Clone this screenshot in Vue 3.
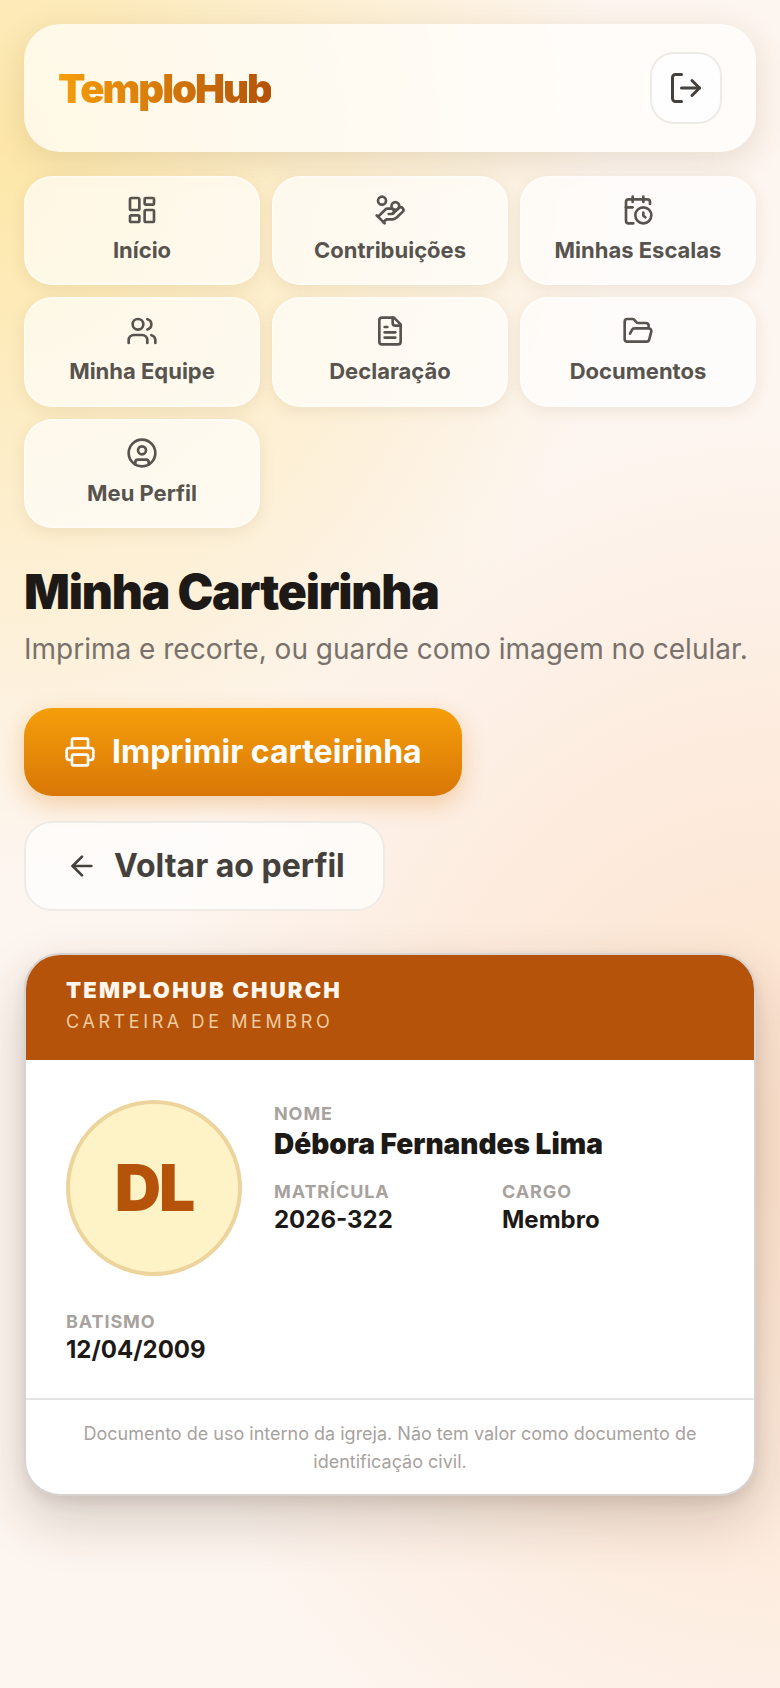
<script setup>
const navItems = [
  { label: 'Início', icon: 'dash' },
  { label: 'Contribuições', icon: 'hand' },
  { label: 'Minhas Escalas', icon: 'cal' },
  { label: 'Minha Equipe', icon: 'users' },
  { label: 'Declaração', icon: 'file' },
  { label: 'Documentos', icon: 'folder' },
  { label: 'Meu Perfil', icon: 'user' },
]
</script>

<template>
  <div class="page">
    <header class="topbar">
      <span class="logo">TemploHub</span>
      <button class="logout" aria-label="Sair">
        <svg width="36" height="36" viewBox="0 0 24 24" fill="none" stroke="currentColor" stroke-width="2" stroke-linecap="round" stroke-linejoin="round">
          <path d="M9 21H5a2 2 0 0 1-2-2V5a2 2 0 0 1 2-2h4" />
          <polyline points="16 17 21 12 16 7" />
          <line x1="21" y1="12" x2="9" y2="12" />
        </svg>
      </button>
    </header>

    <nav class="nav">
      <a v-for="item in navItems" :key="item.label" class="tile">
        <svg width="32" height="32" viewBox="0 0 24 24" fill="none" stroke="currentColor" stroke-width="2" stroke-linecap="round" stroke-linejoin="round">
          <template v-if="item.icon === 'dash'">
            <rect x="3" y="3" width="7" height="9" rx="1" />
            <rect x="14" y="3" width="7" height="5" rx="1" />
            <rect x="14" y="12" width="7" height="9" rx="1" />
            <rect x="3" y="16" width="7" height="5" rx="1" />
          </template>
          <template v-else-if="item.icon === 'hand'">
            <path d="M11 15h2a2 2 0 1 0 0-4h-3c-.6 0-1.1.2-1.4.6L3 17" />
            <path d="m7 21 1.6-1.4c.3-.4.8-.6 1.4-.6h4c1.1 0 2.1-.4 2.8-1.2l4.6-4.4a2 2 0 0 0-2.75-2.91l-4.2 3.9" />
            <path d="m2 16 6 6" />
            <circle cx="16" cy="9" r="2.9" />
            <circle cx="6" cy="5" r="3" />
          </template>
          <template v-else-if="item.icon === 'cal'">
            <path d="M21 7.5V6a2 2 0 0 0-2-2H5a2 2 0 0 0-2 2v14a2 2 0 0 0 2 2h3.5" />
            <path d="M16 2v4" />
            <path d="M8 2v4" />
            <path d="M3 10h5" />
            <path d="M17.5 17.5 16 16.3V14" />
            <circle cx="16" cy="16" r="6" />
          </template>
          <template v-else-if="item.icon === 'users'">
            <path d="M16 21v-2a4 4 0 0 0-4-4H6a4 4 0 0 0-4 4v2" />
            <circle cx="9" cy="7" r="4" />
            <path d="M22 21v-2a4 4 0 0 0-3-3.87" />
            <path d="M16 3.13a4 4 0 0 1 0 7.75" />
          </template>
          <template v-else-if="item.icon === 'file'">
            <path d="M15 2H6a2 2 0 0 0-2 2v16a2 2 0 0 0 2 2h12a2 2 0 0 0 2-2V7Z" />
            <path d="M14 2v4a2 2 0 0 0 2 2h4" />
            <path d="M10 9H8" />
            <path d="M16 13H8" />
            <path d="M16 17H8" />
          </template>
          <template v-else-if="item.icon === 'folder'">
            <path d="m6 14 1.5-2.9A2 2 0 0 1 9.24 10H20a2 2 0 0 1 1.94 2.5l-1.54 6a2 2 0 0 1-1.95 1.5H4a2 2 0 0 1-2-2V5a2 2 0 0 1 2-2h3.9a2 2 0 0 1 1.69.9l.81 1.2a2 2 0 0 0 1.67.9H18a2 2 0 0 1 2 2v2" />
          </template>
          <template v-else>
            <circle cx="12" cy="12" r="10" />
            <circle cx="12" cy="10" r="3" />
            <path d="M7 20.662V19a2 2 0 0 1 2-2h6a2 2 0 0 1 2 2v1.662" />
          </template>
        </svg>
        <span>{{ item.label }}</span>
      </a>
    </nav>

    <h1 class="title">Minha Carteirinha</h1>
    <p class="subtitle">Imprima e recorte, ou guarde como imagem no celular.</p>

    <div class="actions">
      <button class="btn-print">
        <svg width="32" height="32" viewBox="0 0 24 24" fill="none" stroke="currentColor" stroke-width="2" stroke-linecap="round" stroke-linejoin="round">
          <path d="M6 18H4a2 2 0 0 1-2-2v-5a2 2 0 0 1 2-2h16a2 2 0 0 1 2 2v5a2 2 0 0 1-2 2h-2" />
          <path d="M6 9V3a1 1 0 0 1 1-1h10a1 1 0 0 1 1 1v6" />
          <rect x="6" y="14" width="12" height="8" rx="1" />
        </svg>
        Imprimir carteirinha
      </button>
      <button class="btn-back">
        <svg width="32" height="32" viewBox="0 0 24 24" fill="none" stroke="currentColor" stroke-width="2" stroke-linecap="round" stroke-linejoin="round">
          <path d="m12 19-7-7 7-7" />
          <path d="M19 12H5" />
        </svg>
        Voltar ao perfil
      </button>
    </div>

    <section class="card">
      <div class="card-head">
        <div class="church">TEMPLOHUB CHURCH</div>
        <div class="card-kind">CARTEIRA DE MEMBRO</div>
      </div>
      <div class="card-body">
        <div class="member">
          <div class="avatar">DL</div>
          <div class="info">
            <div class="label">NOME</div>
            <div class="name">Débora Fernandes Lima</div>
            <div class="pair">
              <div>
                <div class="label">MATRÍCULA</div>
                <div class="value">2026-322</div>
              </div>
              <div>
                <div class="label">CARGO</div>
                <div class="value">Membro</div>
              </div>
            </div>
          </div>
        </div>
        <div class="baptism">
          <div class="label">BATISMO</div>
          <div class="value">12/04/2009</div>
        </div>
      </div>
      <div class="card-foot">Documento de uso interno da igreja. Não tem valor como documento de identificação civil.</div>
    </section>
  </div>
</template>

<style>
html,
body {
  margin: 0;
  background: #fdf7f1;
}
</style>

<style scoped>
.page {
  box-sizing: border-box;
  min-height: 1688px;
  padding: 24px;
  font-family: Inter, "Liberation Sans", sans-serif;
  background:
    radial-gradient(ellipse 620px 720px at 0% 9%, #fde7a8 0%, rgba(253, 231, 168, 0.55) 42%, rgba(253, 231, 168, 0) 100%),
    radial-gradient(ellipse 640px 720px at 100% 68%, #fde2cc 0%, rgba(253, 226, 204, 0.45) 60%, rgba(253, 226, 204, 0) 100%),
    #fdf5ef;
}

.topbar {
  display: flex;
  align-items: center;
  justify-content: space-between;
  height: 128px;
  box-sizing: border-box;
  padding: 0 34px;
  border-radius: 36px;
  background: rgba(255, 255, 255, 0.7);
  box-shadow: 0 8px 32px rgba(120, 90, 40, 0.16);
}

.logo {
  font-size: 40px;
  font-weight: 900;
  letter-spacing: -0.05em;
  background: linear-gradient(90deg, #f59e0b, #b45309);
  -webkit-background-clip: text;
  background-clip: text;
  color: transparent;
}

.logout {
  display: flex;
  align-items: center;
  justify-content: center;
  width: 72px;
  height: 72px;
  padding: 0;
  border: 2px solid #eeebe7;
  border-radius: 24px;
  background: rgba(255, 255, 255, 0.7);
  color: #44403c;
}

.nav {
  display: grid;
  grid-template-columns: repeat(3, 1fr);
  gap: 12px;
  margin-top: 24px;
}

.tile {
  display: flex;
  flex-direction: column;
  align-items: center;
  gap: 8px;
  padding: 16px 8px;
  border: 2px solid rgba(255, 255, 255, 0.4);
  border-radius: 28px;
  background: rgba(255, 255, 255, 0.66);
  box-shadow: 0 4px 16px rgba(120, 90, 40, 0.11);
  color: #57534e;
  font-size: 22px;
  font-weight: 700;
  line-height: 33.33px;
}

.title {
  margin: 34px 0 0;
  color: #1c1917;
  font-size: 48px;
  font-weight: 900;
  line-height: 60px;
  letter-spacing: -0.025em;
}

.subtitle {
  margin: 6px 0 0;
  color: #78716c;
  font-size: 28px;
  line-height: 42px;
}

.actions {
  display: flex;
  flex-direction: column;
  align-items: flex-start;
  gap: 25px;
  margin-top: 38px;
}

.btn-print,
.btn-back {
  display: flex;
  align-items: center;
  gap: 16px;
  font-family: inherit;
  font-size: 32px;
  font-weight: 700;
}

.btn-print {
  height: 88px;
  padding: 0 40px;
  border: 0;
  border-radius: 28px;
  background: linear-gradient(180deg, #f59e0b, #d97706);
  box-shadow: 0 8px 24px rgba(217, 119, 6, 0.3);
  color: #fff;
}

.btn-back {
  height: 90px;
  padding: 0 38px 0 40px;
  border: 2px solid #eeebe7;
  border-radius: 28px;
  background: rgba(255, 255, 255, 0.65);
  color: #44403c;
}

.card {
  margin-top: 42px;
  overflow: hidden;
  border: 2px solid #d6d3d1;
  border-radius: 36px;
  background: #fff;
  box-shadow: 0 24px 56px rgba(60, 40, 25, 0.2), 0 6px 14px rgba(60, 40, 25, 0.1);
}

.card-head {
  padding: 20px 40px 25px;
  background: #b45309;
}

.church {
  color: #fff7ed;
  font-size: 22px;
  font-weight: 900;
  line-height: 30px;
  letter-spacing: 0.1em;
}

.card-kind {
  margin-top: 4px;
  color: #f0cba0;
  font-size: 18px;
  line-height: 26px;
  letter-spacing: 0.2em;
}

.card-body {
  padding: 40px 40px 33px;
}

.member {
  display: flex;
  gap: 32px;
}

.avatar {
  display: flex;
  flex: none;
  align-items: center;
  justify-content: center;
  box-sizing: border-box;
  width: 176px;
  height: 176px;
  border: 4px solid #edd49c;
  border-radius: 50%;
  background: #fef3c7;
  color: #b45309;
  font-size: 64px;
  font-weight: 900;
  letter-spacing: -0.03em;
}

.info {
  flex: 1;
  padding-top: 1px;
}

.label {
  color: #a8a29e;
  font-size: 18px;
  font-weight: 700;
  line-height: 26px;
  letter-spacing: 0.05em;
}

.name {
  color: #1c1917;
  font-size: 28px;
  font-weight: 900;
  line-height: 34px;
}

.pair {
  display: grid;
  grid-template-columns: 1fr 1fr;
  gap: 16px;
  margin-top: 18px;
}

.value {
  color: #1c1917;
  font-size: 24px;
  font-weight: 700;
  line-height: 30px;
}

.baptism {
  margin-top: 33px;
}

.card-foot {
  padding: 20px 40px 18px;
  border-top: 2px solid #e7e5e4;
  color: #a8a29e;
  font-size: 18px;
  line-height: 28px;
  text-align: center;
}
</style>
